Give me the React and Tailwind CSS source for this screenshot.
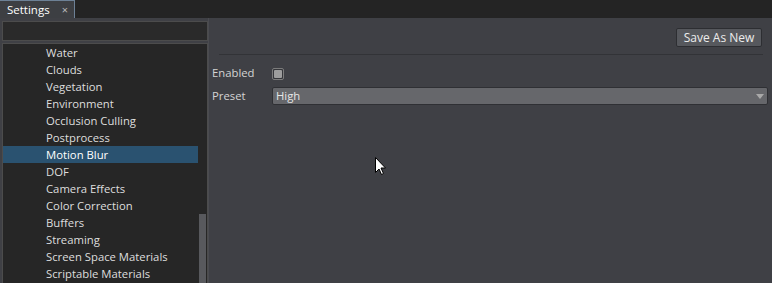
import React from "react";

const items = [
  "Water",
  "Clouds",
  "Vegetation",
  "Environment",
  "Occlusion Culling",
  "Postprocess",
  "Motion Blur",
  "DOF",
  "Camera Effects",
  "Color Correction",
  "Buffers",
  "Streaming",
  "Screen Space Materials",
  "Scriptable Materials",
];

export default function App() {
  return (
    <div
      className="relative w-[772px] h-[283px] overflow-hidden bg-[#3f4045] flex flex-col text-[11.3px] text-[#dedede]"
      style={{ fontFamily: '"Open Sans", "Noto Sans", sans-serif' }}
    >
      {/* tab bar */}
      <div className="h-[18px] bg-[#242424] flex shrink-0">
        <div className="w-[75px] h-[18px] bg-[#3d3f43] border-t border-r border-[#6d8196] flex items-center pl-[7px] pr-[6px] justify-between">
          <span className="leading-none text-[11.5px] text-white">Settings</span>
          <span className="text-[11px] leading-none text-[#b8b8b8]">×</span>
        </div>
      </div>

      <div className="flex flex-1 min-h-0">
        {/* left column */}
        <div className="w-[208px] shrink-0 pl-[2px] pt-[3px] flex flex-col gap-[2px]">
          <div className="h-[20px] shrink-0 border border-[#4c4c4c] bg-[#2a2a2a]" />
          <div className="flex-1 border border-[#4c4c4c] border-b-0 bg-[#262626] relative overflow-hidden">
            <div className="flex flex-col pr-[9px]">
              {items.map((it) => (
                <div
                  key={it}
                  className={
                    "h-[17px] leading-[17px] pl-[43px] whitespace-nowrap " +
                    (it === "Motion Blur" ? "bg-[#2a5270] text-white" : "")
                  }
                >
                  {it}
                </div>
              ))}
            </div>
            <div className="absolute right-[1px] top-[170px] bottom-0 w-[7px] bg-[#58595d]" />
          </div>
        </div>

        {/* right panel */}
        <div className="flex-1 border-l border-[#4a4b50] flex flex-col pt-[10px]">
          <div className="flex justify-end pr-[10px]">
            <button className="w-[86px] h-[19px] bg-[#56585d] border border-[#2d2e32] rounded-[2px] text-[12px] leading-none text-[#ececec]">
              Save As New
            </button>
          </div>
          <div className="mt-[7px] ml-[10px] mr-[9px] h-px bg-[#323337]" />
          <div className="flex items-center h-[17px] mt-[10px] pl-[3px]">
            <span className="w-[60px] text-[#d4d4d4]">Enabled</span>
            <div className="w-[12px] h-[12px] border border-[#7c7c7c] rounded-[2px] bg-[#36373b] p-[1px]">
              <div className="w-full h-full bg-[#9d9d9d] rounded-[1px]" />
            </div>
          </div>
          <div className="flex items-center h-[18px] mt-[5px] pl-[3px] pr-[4px]">
            <span className="w-[60px] text-[#d4d4d4]">Preset</span>
            <div className="flex-1 h-[18px] bg-[#66676b] border border-[#2f3034] rounded-[2px] flex items-center justify-between pl-[3px] pr-[3px]">
              <span className="text-[#e6e6e6]">High</span>
              <svg width="8" height="5" viewBox="0 0 8 5">
                <path d="M0 0 L8 0 L4 5 Z" fill="#a9a9a9" />
              </svg>
            </div>
          </div>
        </div>
      </div>

      {/* mouse cursor */}
      <svg
        className="absolute left-[375px] top-[157px]"
        width="12"
        height="19"
        viewBox="0 0 12 19"
      >
        <path
          d="M0.5 0.5 L0.5 15.5 L4 12 L6.5 17.5 L8.5 16.5 L6 11 L10.5 11 Z"
          fill="#ffffff"
          stroke="#000000"
          strokeWidth="1"
        />
      </svg>
    </div>
  );
}
